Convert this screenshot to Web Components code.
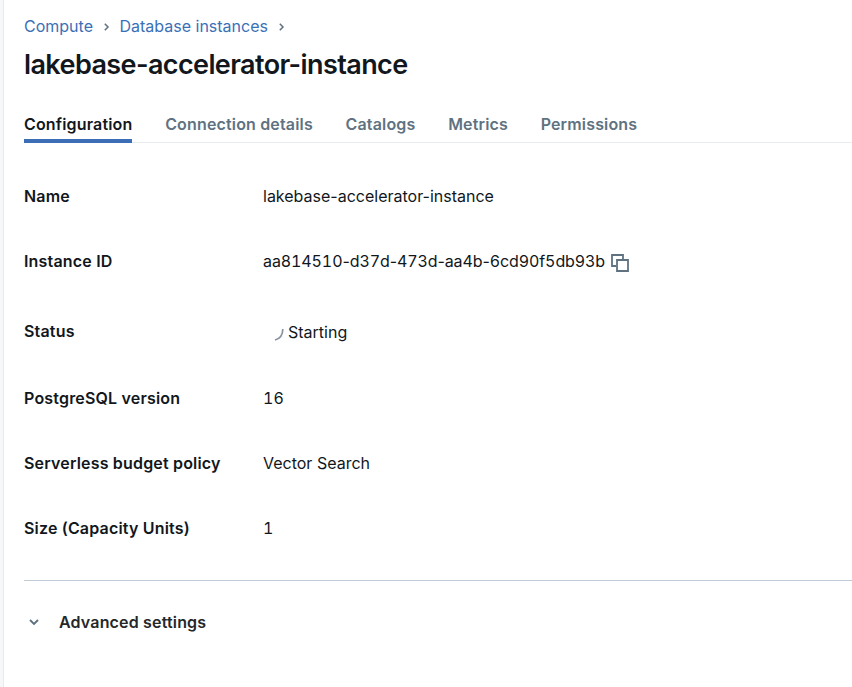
<!DOCTYPE html>
<html lang="en"><head><meta charset="utf-8"><title>lakebase-accelerator-instance</title>
<style>body{margin:0;background:#fff;color:#11171c;font-family:Inter,"Liberation Sans",sans-serif;font-size:16px;line-height:20px}</style></head><body>
<instance-page></instance-page>
<script>
const define=(name,html)=>customElements.define(name,class extends HTMLElement{connectedCallback(){if(!this.shadowRoot)this.attachShadow({mode:"open"}).innerHTML=html;}});
define("page-crumb",`<style>:host{display:flex;align-items:center;color:#3a70b8}svg{margin:2px 0 0 9px;display:block}span{white-space:nowrap}</style><span><slot></slot></span><svg width="9" height="10" viewBox="0 0 9 10" fill="none" stroke="#5f7281" stroke-width="1.5"><path d="M2.8 1.7l3.2 3.3-3.2 3.3"/></svg>`);
define("page-tab",`<style>:host{display:block;box-sizing:border-box;height:29px;color:#5f7281;font-weight:600;white-space:nowrap;letter-spacing:.16px}:host([active]){color:#11171c;border-bottom:4px solid #3c6eb5}</style><slot></slot>`);
define("detail-row",`<style>:host{display:grid;grid-template-columns:239px 1fr;align-items:start;height:var(--h,65px);white-space:nowrap}b{font-weight:600;letter-spacing:.18px}div{display:flex;align-items:center;padding-top:var(--drop,0)}</style><b><slot name="label"></slot></b><div><slot></slot></div>`);
define("copy-icon",`<style>:host{display:block;margin:2px 0 -2px 6px}svg{display:block}</style><svg width="18" height="18" viewBox="0 0 18 18" fill="none" stroke="#5f7281" stroke-width="1.8"><path d="M5 12H1V1h11v4M6 6h11v11H6z"/></svg>`);
define("busy-icon",`<style>:host{display:block;width:25px;height:20px}svg{display:block}</style><svg width="25" height="20" viewBox="0 0 25 20" fill="none" stroke="#8793a0" stroke-width="1.7"><path d="M19.8 7q0 9-7.8 11"/></svg>`);
define("instance-page",`<style>:host{display:block;box-sizing:border-box;height:687px;border-left:3px solid #f6f7f9;box-shadow:inset 1px 0 #e8ebee;padding:16px 0 0 21px;overflow:hidden}.crumbs{display:flex;gap:8.5px;height:20px}h1{margin:12px 0 0;font-size:27px;line-height:34px;font-weight:600;letter-spacing:-.6px;white-space:nowrap}.tabs{display:flex;gap:32.7px;margin-top:32px;border-bottom:1px solid #e8ecef;height:28px}.rows{margin-top:43px}.num{font-variant-numeric:tabular-nums}.num i{font-style:normal;font-variant-numeric:normal}.advanced{border-top:1px solid #c0cdd8;display:flex;align-items:center;padding-top:31px;font-weight:600;letter-spacing:.17px;color:#252729}.advanced svg{margin:0 20px 0 5px}</style>
<nav class="crumbs"><page-crumb>Compute</page-crumb><page-crumb>Database instances</page-crumb></nav><h1>lakebase-accelerator-instance</h1>
<nav class="tabs"><page-tab active>Configuration</page-tab><page-tab>Connection details</page-tab><page-tab>Catalogs</page-tab><page-tab>Metrics</page-tab><page-tab>Permissions</page-tab></nav>
<section class="rows"><detail-row><span slot="label">Name</span>lakebase-accelerator-instance</detail-row><detail-row style="--h:70px"><span slot="label">Instance ID</span><span class="num" style="letter-spacing:-.1px">aa814510<i>-</i>d37d<i>-</i>473d<i>-</i>aa4b<i>-</i>6cd90f5db93b</span><copy-icon></copy-icon></detail-row><detail-row style="--h:67px;--drop:1px"><span slot="label">Status</span><busy-icon></busy-icon>Starting</detail-row><detail-row><span slot="label">PostgreSQL version</span><span class="num">16</span></detail-row><detail-row><span slot="label">Serverless budget policy</span>Vector Search</detail-row><detail-row style="--h:62px"><span slot="label">Size (Capacity Units)</span><span class="num">1</span></detail-row></section>
<section class="advanced"><svg width="10" height="8" viewBox="0 0 10 8" fill="none" stroke="#5f7281" stroke-width="1.9"><path d="M1 2l4 4 4-4"/></svg>Advanced settings</section>`);
</script></body></html>
